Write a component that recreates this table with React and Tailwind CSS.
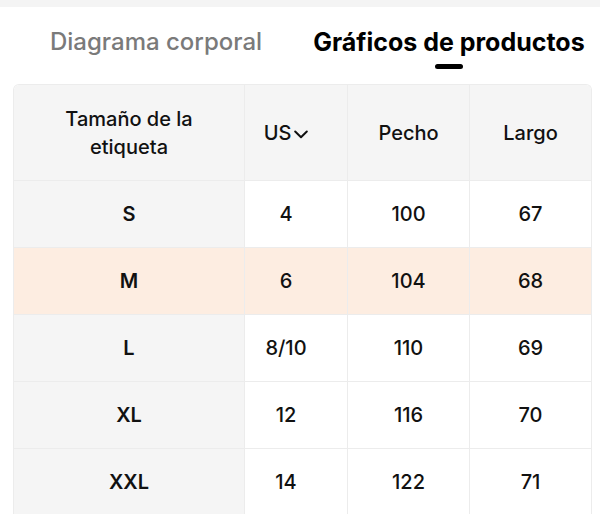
const rows = [
  { size: 'S', us: '4', pecho: '100', largo: '67' },
  { size: 'M', us: '6', pecho: '104', largo: '68', active: true },
  { size: 'L', us: '8/10', pecho: '110', largo: '69' },
  { size: 'XL', us: '12', pecho: '116', largo: '70' },
  { size: 'XXL', us: '14', pecho: '122', largo: '71' },
]

export default function App() {
  const cell = 'flex items-center justify-center border-[#ececec]'
  return (
    <div className="w-[600px] h-[514px] overflow-hidden bg-white text-[#111] font-['Inter',sans-serif]">
      <div className="h-[7px] bg-[#f4f4f4]" />
      <div className="flex items-start gap-[51px] pt-[21px] pl-[50px]">
        <div className="text-[24px] leading-[28px] text-[#7a7a7a] font-medium">Diagrama corporal</div>
        <div className="flex flex-col items-center">
          <div className="text-[25px] leading-[28px] font-bold text-black">Gráficos de productos</div>
          <div className="mt-[8px] w-[28px] h-[5px] rounded-full bg-black" />
        </div>
      </div>
      <div className="mx-[13px] mt-[15px] w-[579px] rounded-t-[6px] border border-b-0 border-[#ececec] overflow-hidden">
        <div className="grid grid-cols-[230px_103px_122px_1fr] bg-[#f5f5f5] h-[95px] text-[20px] font-medium">
          <div className={`${cell} text-center leading-[28px]`}>Tamaño de la<br />etiqueta</div>
          <div className={`${cell} border-l gap-[3px] pr-[20px]`}>
            US
            <svg width="14" height="9" viewBox="0 0 14 9" fill="none" className="mt-[3px]">
              <polyline points="1.2,1.5 7,7.2 12.8,1.5" stroke="#111" strokeWidth="2" strokeLinecap="round" strokeLinejoin="round" />
            </svg>
          </div>
          <div className={`${cell} border-l`}>Pecho</div>
          <div className={`${cell} border-l`}>Largo</div>
        </div>
        {rows.map((r) => (
          <div key={r.size} className={`grid grid-cols-[230px_103px_122px_1fr] h-[67px] border-t border-[#ececec] text-[20px] font-medium ${r.active ? 'bg-[#fdede1]' : 'bg-white'}`}>
            <div className={`${cell} font-semibold ${r.active ? '' : 'bg-[#f5f5f5]'}`}>{r.size}</div>
            <div className={`${cell} border-l pr-[20px]`}>{r.us}</div>
            <div className={`${cell} border-l`}>{r.pecho}</div>
            <div className={`${cell} border-l`}>{r.largo}</div>
          </div>
        ))}
      </div>
    </div>
  )
}
